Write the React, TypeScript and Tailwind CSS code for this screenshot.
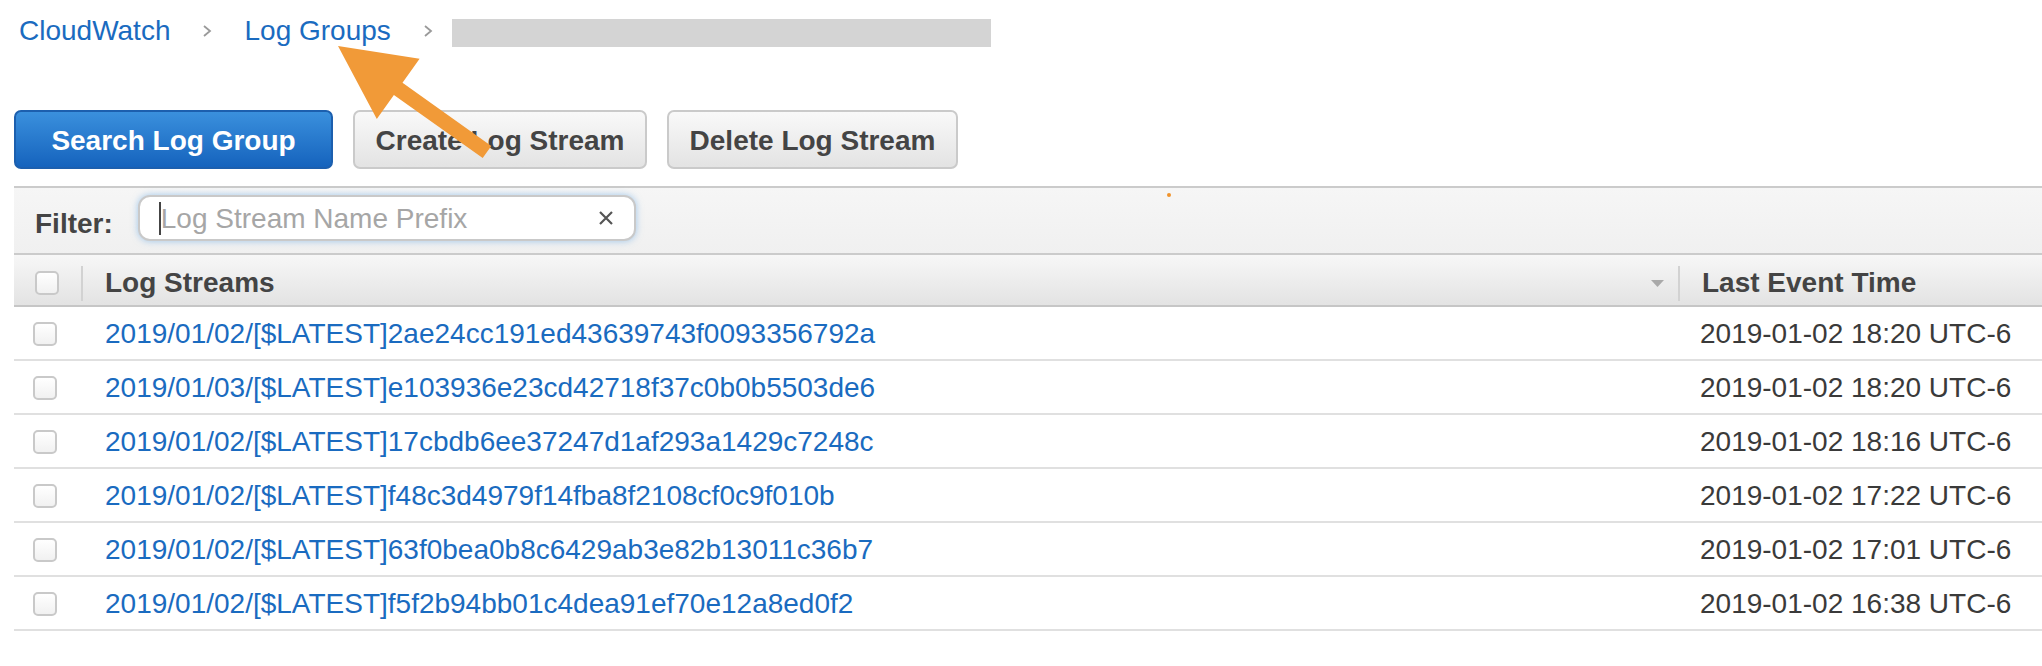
import React from 'react'

const streams = [
  { name: '2019/01/02/[$LATEST]2ae24cc191ed43639743f0093356792a', time: '2019-01-02 18:20 UTC-6' },
  { name: '2019/01/03/[$LATEST]e103936e23cd42718f37c0b0b5503de6', time: '2019-01-02 18:20 UTC-6' },
  { name: '2019/01/02/[$LATEST]17cbdb6ee37247d1af293a1429c7248c', time: '2019-01-02 18:16 UTC-6' },
  { name: '2019/01/02/[$LATEST]f48c3d4979f14fba8f2108cf0c9f010b', time: '2019-01-02 17:22 UTC-6' },
  { name: '2019/01/02/[$LATEST]63f0bea0b8c6429ab3e82b13011c36b7', time: '2019-01-02 17:01 UTC-6' },
  { name: '2019/01/02/[$LATEST]f5f2b94bb01c4dea91ef70e12a8ed0f2', time: '2019-01-02 16:38 UTC-6' },
]

function Chevron() {
  return (
    <svg width="10" height="12" viewBox="0 0 10 12" className="mt-[10px]">
      <path d="M2 1 L8 6 L2 11" fill="none" stroke="#9a9a9a" strokeWidth="1.8" />
    </svg>
  )
}

function Checkbox() {
  return (
    <div className="h-[24px] w-[24px] rounded-[5px] border-2 border-[#c9c9c9] bg-gradient-to-b from-white to-[#f1f1f1]" />
  )
}

export default function App() {
  return (
    <div className="relative h-[666px] w-full overflow-hidden bg-white font-['Liberation_Sans',Arial,sans-serif] text-[28px]">
      {/* breadcrumb */}
      <div className="flex h-[47px] items-start pl-[19px] pt-[15px] leading-[32px]">
        <span className="text-[#1a6bc0]">CloudWatch</span>
        <div className="ml-[32px] mr-[32px]">
          <Chevron />
        </div>
        <span className="text-[#1a6bc0]">Log Groups</span>
        <div className="ml-[32px] mr-[19px]">
          <Chevron />
        </div>
        <div className="mt-[4px] h-[28px] w-[539px] bg-[#d4d4d4]" />
      </div>

      {/* buttons */}
      <div className="ml-[14px] mt-[63px] flex h-[59px] gap-[20px]">
        <button className="w-[319px] rounded-[7px] border-2 border-[#1c5fae] bg-gradient-to-b from-[#3a90dd] to-[#1563bd] pt-[2px] font-bold text-white">
          Search Log Group
        </button>
        <button className="w-[294px] rounded-[7px] border-2 border-[#cacaca] bg-gradient-to-b from-[#f9f9f9] to-[#e3e3e3] pt-[2px] font-bold text-[#444]">
          Create Log Stream
        </button>
        <button className="w-[291px] rounded-[7px] border-2 border-[#cacaca] bg-gradient-to-b from-[#f9f9f9] to-[#e3e3e3] pt-[2px] font-bold text-[#444]">
          Delete Log Stream
        </button>
      </div>

      {/* table */}
      <div className="ml-[14px] mt-[17px]">
        {/* filter bar */}
        <div className="flex h-[67px] items-start border-t-2 border-[#cbcbcb] bg-gradient-to-b from-[#f6f6f6] to-[#f0f0f0] pl-[21px] pt-[7px]">
          <span className="mt-[13px] font-bold leading-[32px] text-[#444]">Filter:</span>
          <div className="ml-[25px] flex h-[46px] w-[498px] items-center rounded-[12px] border-2 border-[#c9c9c9] bg-white pl-[19px] pr-[20px] shadow-[0_0_7px_rgba(90,160,225,0.55)]">
            <div className="h-[33px] w-[2px] bg-[#444]" />
            <span className="flex-1 pt-[2px] leading-[32px] text-[#a6a6a6]">Log Stream Name Prefix</span>
            <svg width="16" height="16" viewBox="0 0 16 16">
              <path d="M2 2 L14 14 M14 2 L2 14" stroke="#555" strokeWidth="2.2" />
            </svg>
          </div>
        </div>

        {/* header */}
        <div className="flex h-[54px] items-center border-y-2 border-t-[#cbcbcb] border-b-[#c6c6c6] bg-gradient-to-b from-[#f7f7f7] to-[#e3e3e3] pt-[6px]">
          <div className="w-[67px] pl-[21px]">
            <Checkbox />
          </div>
          <div className="flex flex-1 items-center">
            <div className="h-[35px] w-[2px] bg-[#d2d2d2]" />
            <span className="ml-[22px] flex-1 font-bold text-[#444]">Log Streams</span>
            <svg width="13" height="7" viewBox="0 0 13 7" className="mr-[14px]">
              <path d="M0 0 L13 0 L6.5 7 Z" fill="#a9a9a9" />
            </svg>
          </div>
          <div className="flex w-[364px] items-center">
            <div className="h-[35px] w-[2px] bg-[#d2d2d2]" />
            <span className="ml-[22px] font-bold text-[#444]">Last Event Time</span>
          </div>
        </div>

        {/* rows */}
        {streams.map((s) => (
          <div key={s.name} className="flex h-[54px] items-center border-b-2 border-[#e0e0e0] pt-[2px]">
            <div className="w-[67px] pl-[19px]">
              <Checkbox />
            </div>
            <span className="flex-1 pl-[24px] text-[#1a6bc0]">{s.name}</span>
            <span className="w-[364px] pl-[22px] text-[#3a3a3a]">{s.time}</span>
          </div>
        ))}
      </div>

      {/* annotation */}
      <div className="absolute left-[1167px] top-[193px] h-[4px] w-[4px] rounded-full bg-[#f0932b]" />
      <svg className="pointer-events-none absolute left-0 top-0" width="2042" height="666">
        <polygon
          points="338,46 419.6,58.7 402.5,82.7 491.3,145.9 482.7,158.1 393.9,94.9 376.8,118.9"
          fill="#f19a38"
        />
      </svg>
    </div>
  )
}
